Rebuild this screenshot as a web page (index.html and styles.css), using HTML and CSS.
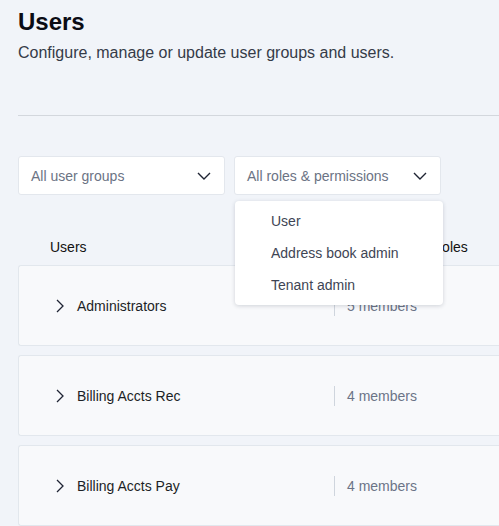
FILE: index.html
```html
<!DOCTYPE html>
<html lang="en">
<head>
<meta charset="utf-8">
<title>Users</title>
<link rel="stylesheet" href="styles.css">
</head>
<body>
<main class="page">
  <header class="page-header">
    <h1 class="title">Users</h1>
    <p class="subtitle">Configure, manage or update user groups and users.</p>
  </header>
  <hr class="divider">
  <div class="filters">
    <div class="select">
      <span class="select-label">All user groups</span>
      <svg class="select-chevron" width="14" height="8" viewBox="0 0 14 8"><path d="M1 1l6 6 6-6" fill="none" stroke="#1f2433" stroke-width="1.4"/></svg>
    </div>
    <div class="select select-open">
      <span class="select-label">All roles &amp; permissions</span>
      <svg class="select-chevron" width="14" height="8" viewBox="0 0 14 8"><path d="M1 1l6 6 6-6" fill="none" stroke="#1f2433" stroke-width="1.4"/></svg>
      <ul class="menu">
        <li class="menu-item">User</li>
        <li class="menu-item">Address book admin</li>
        <li class="menu-item">Tenant admin</li>
      </ul>
    </div>
  </div>
  <div class="table-head">
    <span class="col-users">Users</span>
    <span class="col-roles">Roles</span>
  </div>
  <div class="groups">
    <div class="group">
      <svg class="expand" width="8" height="14" viewBox="0 0 8 14"><path d="M1 1l6 6-6 6" fill="none" stroke="#1f2433" stroke-width="1.3"/></svg>
      <span class="group-name">Administrators</span>
      <span class="group-sep"></span>
      <span class="group-count">5 members</span>
    </div>
    <div class="group">
      <svg class="expand" width="8" height="14" viewBox="0 0 8 14"><path d="M1 1l6 6-6 6" fill="none" stroke="#1f2433" stroke-width="1.3"/></svg>
      <span class="group-name">Billing Accts Rec</span>
      <span class="group-sep"></span>
      <span class="group-count">4 members</span>
    </div>
    <div class="group">
      <svg class="expand" width="8" height="14" viewBox="0 0 8 14"><path d="M1 1l6 6-6 6" fill="none" stroke="#1f2433" stroke-width="1.3"/></svg>
      <span class="group-name">Billing Accts Pay</span>
      <span class="group-sep"></span>
      <span class="group-count">4 members</span>
    </div>
  </div>
</main>
</body>
</html>
```

FILE: styles.css
```css
html, body {
  margin: 0;
  padding: 0;
  background: #f1f4f9;
  overflow: hidden;
}
body {
  font-family: "Liberation Sans", Arial, sans-serif;
  color: #1c1f26;
}
.page {
  padding: 8px 0 0 18px;
}
.title {
  margin: 0;
  font-size: 24px;
  line-height: 28px;
  font-weight: bold;
  color: #0b0c14;
}
.subtitle {
  margin: 7px 0 0;
  font-size: 16px;
  line-height: 20px;
  color: #353b48;
}
.divider {
  margin: 52px 0 0;
  border: 0;
  border-top: 1px solid #d3d7dd;
  height: 0;
}
.filters {
  display: flex;
  gap: 9px;
  margin-top: 40px;
}
.select {
  position: relative;
  box-sizing: border-box;
  width: 207px;
  height: 39px;
  background: #fff;
  border: 1px solid #e3e7ed;
  border-radius: 3px;
  display: flex;
  align-items: center;
  justify-content: space-between;
  padding: 0 13px 0 12px;
}
.select-label {
  font-size: 14px;
  color: #6b7384;
}
.select-chevron {
  display: block;
}
.menu {
  position: absolute;
  left: 0;
  top: 44px;
  width: 208px;
  box-sizing: border-box;
  margin: 0;
  padding: 4px 0 4px;
  list-style: none;
  background: #fff;
  border-radius: 4px;
  box-shadow: 0 1px 4px rgba(30, 40, 60, 0.18);
  z-index: 2;
}
.menu-item {
  height: 32px;
  line-height: 32px;
  padding-left: 36px;
  font-size: 14px;
  color: #3e4554;
}
.table-head {
  display: flex;
  height: 24px;
  align-items: center;
  margin-top: 40px;
  font-size: 14px;
  color: #111;
}
.col-users {
  padding-left: 32px;
  width: 382px;
}
.groups {
  display: flex;
  flex-direction: column;
  gap: 9px;
  margin-top: 6px;
}
.group {
  box-sizing: border-box;
  height: 81px;
  background: #f8f9fb;
  border: 1px solid #e2e7ed;
  border-right: 0;
  border-radius: 3px 0 0 3px;
  display: flex;
  align-items: center;
  padding-left: 37px;
}
.expand {
  display: block;
  margin-right: 13px;
}
.group-name {
  width: 257px;
  font-size: 14px;
  color: #1c1f26;
}
.group-sep {
  width: 1px;
  height: 20px;
  background: #cfd5dd;
  margin-right: 12px;
}
.group-count {
  font-size: 14px;
  color: #6b7487;
}
```
